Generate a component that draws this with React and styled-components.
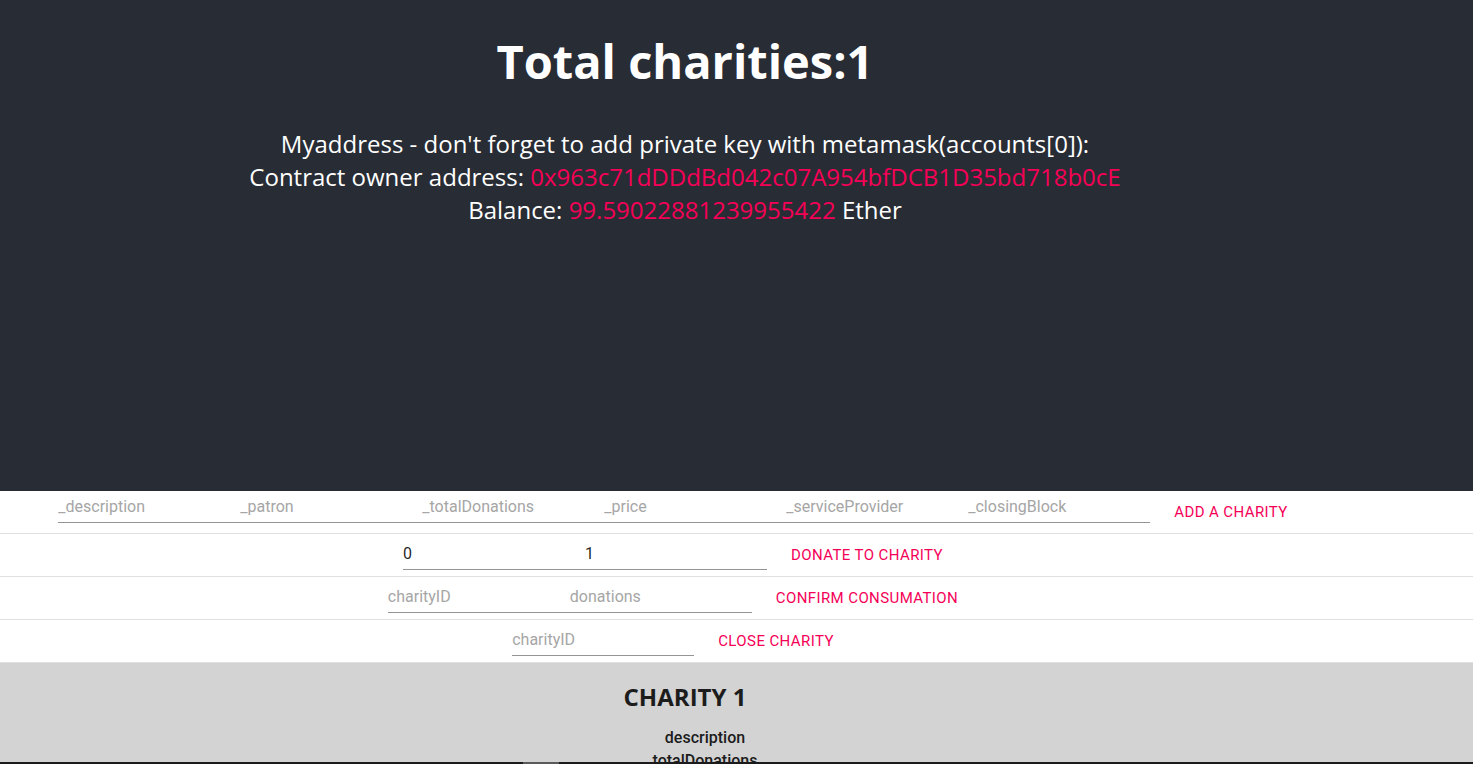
import React from 'react';
import styled, { createGlobalStyle } from 'styled-components';

const GlobalStyle = createGlobalStyle`
  body {
    margin: 0;
    background: #d3d3d3;
    font-family: Roboto, 'Liberation Sans', sans-serif;
    overflow: hidden;
  }
`;

const Header = styled.header`
  background: #282c34;
  color: #fff;
  height: 491px;
  box-sizing: border-box;
  padding: 0 103px 0 0;
  text-align: center;
  font-family: 'Open Sans', sans-serif;
`;

const Title = styled.h1`
  margin: 0;
  padding-top: 26px;
  font-size: 47px;
  line-height: 70px;
  font-weight: 700;
`;

const Info = styled.div`
  margin-top: 31px;
  font-size: 24px;
  line-height: 33px;
`;

const Accent = styled.span`
  color: #f50057;
`;

const FormRow = styled.div`
  display: flex;
  justify-content: center;
  align-items: flex-start;
  height: 42px;
  padding-right: 103px;
  background: #fff;
  border-bottom: 1px solid #e0e0e0;
`;

const Fields = styled.div`
  display: flex;
  margin-top: ${(p) => p.$offset}px;
`;

const Field = styled.input`
  width: 182px;
  box-sizing: border-box;
  border: 0;
  border-bottom: 1px solid #949494;
  padding: 6px 0;
  height: 32px;
  font-family: Roboto, sans-serif;
  font-size: 16px;
  line-height: 19px;
  color: rgba(0, 0, 0, 0.87);
  background: transparent;
  outline: none;

  &::placeholder {
    color: #a6a6a6;
    opacity: 1;
  }
`;

const TextButton = styled.button`
  align-self: center;
  margin: 0 16px;
  padding: 6px 8px;
  border: 0;
  background: transparent;
  color: #f50057;
  font-family: Roboto, sans-serif;
  font-size: 15px;
  font-weight: 400;
  line-height: 24px;
  letter-spacing: 0.4px;
  text-transform: uppercase;
  cursor: pointer;
`;

const CharityCard = styled.section`
  padding: 18px 103px 0 0;
  text-align: center;
  color: #1c1c1c;
`;

const CharityTitle = styled.h2`
  margin: 0;
  font-family: 'Open Sans', sans-serif;
  font-size: 24px;
  line-height: 32px;
  font-weight: 700;
`;

const FieldList = styled.ul`
  list-style: none;
  margin: 13px 0 0;
  padding-left: 40px;
  font-size: 16px;
  font-weight: 500;
  line-height: 23px;
`;

const BottomStrip = styled.div`
  position: fixed;
  left: 0;
  right: 0;
  bottom: 0;
  height: 2px;
  background: #1b1b1b;

  &::after {
    content: '';
    position: absolute;
    left: 523px;
    width: 36px;
    top: 0;
    bottom: 0;
    background: #5a5a5a;
  }
`;

const rows = [
  {
    offset: 0,
    fields: ['_description', '_patron', '_totalDonations', '_price', '_serviceProvider', '_closingBlock'],
    action: 'Add a charity',
  },
  { offset: 4, values: ['0', '1'], action: 'Donate to charity' },
  { offset: 4, fields: ['charityID', 'donations'], action: 'Confirm consumation' },
  { offset: 4, fields: ['charityID'], action: 'Close charity' },
];

const App = () => (
  <>
    <GlobalStyle />
    <Header>
      <Title>Total charities:1</Title>
      <Info>
        <div>Myaddress - don't forget to add private key with metamask(accounts[0]):</div>
        <div>
          Contract owner address: <Accent>0x963c71dDDdBd042c07A954bfDCB1D35bd718b0cE</Accent>
        </div>
        <div>
          Balance: <Accent>99.59022881239955422</Accent> Ether
        </div>
      </Info>
    </Header>

    {rows.map((row) => (
      <FormRow key={row.action}>
        <Fields $offset={row.offset}>
          {row.fields &&
            row.fields.map((name, i) => <Field key={name + i} placeholder={name} />)}
          {row.values &&
            row.values.map((value, i) => <Field key={i} defaultValue={value} />)}
        </Fields>
        <TextButton>{row.action}</TextButton>
      </FormRow>
    ))}

    <CharityCard>
      <CharityTitle>CHARITY 1</CharityTitle>
      <FieldList>
        <li>description</li>
        <li>totalDonations</li>
        <li>price</li>
      </FieldList>
    </CharityCard>

    <BottomStrip />
  </>
);

export default App;
